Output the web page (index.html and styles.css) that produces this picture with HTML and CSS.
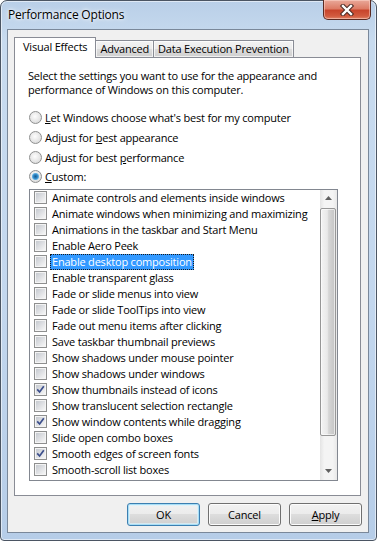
FILE: index.html
```html
<!DOCTYPE html>
<html lang="en">
<head>
    <meta charset="UTF-8">
    <meta name="viewport" content="width=device-width, initial-scale=1.0">
    <title>Performance Options</title>
    <link rel="stylesheet" href="styles.css">
</head>
<body>
    <div class="window">
        <!-- Title bar -->
        <div class="titlebar">
            <span class="title">Performance Options</span>
            <button class="close" aria-label="Close">
                <svg width="16" height="12" viewBox="0 0 16 12">
                    <path d="M4 2 L12 10 M12 2 L4 10" stroke="#4a2a24" stroke-width="4.4" stroke-linecap="square"/>
                    <path d="M4 2 L12 10 M12 2 L4 10" stroke="#fff" stroke-width="2.4" stroke-linecap="square"/>
                </svg>
            </button>
        </div>

        <div class="client">
            <!-- Tabs -->
            <div class="tabs">
                <div class="tab selected">Visual Effects</div>
                <div class="tab">Advanced</div>
                <div class="tab">Data Execution Prevention</div>
            </div>

            <div class="panel">
                <p class="intro">Select the settings you want to use for the appearance and<br>performance of Windows on this computer.</p>

                <div class="options">
                    <label class="option"><span class="radio"></span><span><u>L</u>et Windows choose what's best for my computer</span></label>
                    <label class="option"><span class="radio"></span><span>Adjust for <u>b</u>est appearance</span></label>
                    <label class="option"><span class="radio"></span><span>Adjust for best <u>p</u>erformance</span></label>
                    <label class="option"><span class="radio on"></span><span><u>C</u>ustom:</span></label>
                </div>

                <!-- Effects list -->
                <div class="listbox">
                    <div class="items">
                        <div class="item"><span class="check"></span><span class="text">Animate controls and elements inside windows</span></div>
                        <div class="item"><span class="check"></span><span class="text">Animate windows when minimizing and maximizing</span></div>
                        <div class="item"><span class="check"></span><span class="text">Animations in the taskbar and Start Menu</span></div>
                        <div class="item"><span class="check"></span><span class="text">Enable Aero Peek</span></div>
                        <div class="item"><span class="check"></span><span class="text focus">Enable desktop composition</span></div>
                        <div class="item"><span class="check"></span><span class="text">Enable transparent glass</span></div>
                        <div class="item"><span class="check"></span><span class="text">Fade or slide menus into view</span></div>
                        <div class="item"><span class="check"></span><span class="text">Fade or slide ToolTips into view</span></div>
                        <div class="item"><span class="check"></span><span class="text">Fade out menu items after clicking</span></div>
                        <div class="item"><span class="check"></span><span class="text">Save taskbar thumbnail previews</span></div>
                        <div class="item"><span class="check"></span><span class="text">Show shadows under mouse pointer</span></div>
                        <div class="item"><span class="check"></span><span class="text">Show shadows under windows</span></div>
                        <div class="item"><span class="check"><svg viewBox="0 0 9 9"><path d="M1.2 4.4 L3.6 7 L7.8 1.2"/></svg></span><span class="text">Show thumbnails instead of icons</span></div>
                        <div class="item"><span class="check"></span><span class="text">Show translucent selection rectangle</span></div>
                        <div class="item"><span class="check"><svg viewBox="0 0 9 9"><path d="M1.2 4.4 L3.6 7 L7.8 1.2"/></svg></span><span class="text">Show window contents while dragging</span></div>
                        <div class="item"><span class="check"></span><span class="text">Slide open combo boxes</span></div>
                        <div class="item"><span class="check"><svg viewBox="0 0 9 9"><path d="M1.2 4.4 L3.6 7 L7.8 1.2"/></svg></span><span class="text">Smooth edges of screen fonts</span></div>
                        <div class="item"><span class="check"></span><span class="text">Smooth-scroll list boxes</span></div>
                    </div>
                    <div class="scrollbar">
                        <div class="arrow"><svg width="7" height="4" viewBox="0 0 7 4"><polygon points="0,4 3.5,0 7,4" fill="#606060"/></svg></div>
                        <div class="track"><div class="thumb"></div></div>
                        <div class="arrow"><svg width="7" height="4" viewBox="0 0 7 4"><polygon points="0,0 3.5,4 7,0" fill="#606060"/></svg></div>
                    </div>
                </div>
            </div>

            <!-- Dialog buttons -->
            <div class="buttons">
                <button class="btn default">OK</button>
                <button class="btn">Cancel</button>
                <button class="btn"><u>A</u>pply</button>
            </div>
        </div>
    </div>
</body>
</html>
```

FILE: styles.css
```css
* {
    box-sizing: border-box;
    margin: 0;
    padding: 0;
}
body {
    width: 377px;
    height: 541px;
    overflow: hidden;
    font-family: "Open Sans", "Noto Sans", sans-serif;
    font-size: 11px;
    letter-spacing: -0.2px;
    color: #000;
    background-color: #fff;
}
.window {
    display: flex;
    flex-direction: column;
    width: 377px;
    height: 541px;
    padding: 0 7px 7px 6px;
    border: 1px solid #4b5563;
    border-radius: 7px 7px 4px 4px;
    background: linear-gradient(180deg, #b9cfe8 0, #c8dbef 40px, #c3d7ee 300px, #b6cde8 100%);
    box-shadow: inset 0 0 0 1px rgba(255, 255, 255, 0.55);
}
.titlebar {
    display: flex;
    justify-content: space-between;
    align-items: flex-start;
    height: 28px;
}
.title {
    padding-left: 1px;
    font-size: 12px;
    line-height: 28px;
    text-shadow: 0 0 6px #fff, 0 0 3px #fff;
}
.close {
    display: flex;
    align-items: center;
    justify-content: center;
    width: 48px;
    height: 20px;
    margin: -1px -2px 0 0;
    border: 1px solid #5a2a22;
    border-top: none;
    border-radius: 0 0 5px 5px;
    background: linear-gradient(180deg, #e9a99a 0, #dd7c66 45%, #c8452c 55%, #d25b3f 85%, #e0866a 100%);
    box-shadow: inset 0 0 0 1px rgba(255, 220, 210, 0.5);
}
.client {
    display: flex;
    flex-direction: column;
    flex: 1;
    padding: 7px 7px 6px 6px;
    border: 1px solid #7a889a;
    background-color: #f0f0f0;
}
.tabs {
    position: relative;
    z-index: 1;
    display: flex;
    align-items: flex-end;
    height: 21px;
    margin-bottom: -1px;
}
.tab {
    height: 18px;
    margin-left: -1px;
    padding: 0 4px;
    line-height: 16px;
    border: 1px solid #898c95;
    background: linear-gradient(180deg, #f3f3f3 0, #ebebeb 50%, #dddddd 50%, #cfcfcf 100%);
    box-shadow: inset 0 0 0 1px rgba(255, 255, 255, 0.7);
}
.tab.selected {
    position: relative;
    z-index: 2;
    height: 21px;
    margin-left: 0;
    padding: 0 8px;
    line-height: 18px;
    border-bottom: none;
    background: #fff;
    box-shadow: none;
}
.panel {
    flex: 1;
    padding: 11px 11px 0 14px;
    border: 1px solid #898c95;
    background-color: #fff;
}
.intro {
    margin-left: -1px;
    line-height: 14px;
}
.options {
    margin-top: 11px;
}
.option {
    display: flex;
    align-items: center;
    gap: 3px;
    height: 19.7px;
}
.radio {
    flex-shrink: 0;
    width: 13px;
    height: 13px;
    border: 1px solid #8e8f8f;
    border-radius: 50%;
    background: radial-gradient(circle at 45% 40%, #fdfdfd 0, #e6e6e6 55%, #cfcfcf 100%);
}
.radio.on {
    background:
        radial-gradient(circle at 50% 50%, #1a5c8c 0, #2a7fbf 1.8px, #4fa3d9 2.8px, #7fc0e6 3.4px, transparent 3.9px),
        radial-gradient(circle at 45% 40%, #fdfdfd 0, #e6e6e6 55%, #cfcfcf 100%);
}
.listbox {
    display: flex;
    height: 292px;
    margin: 2px 11px 0 0;
    border: 1px solid #828790;
    background-color: #fff;
}
.items {
    flex: 1;
    min-width: 0;
    overflow: hidden;
}
.item {
    display: flex;
    align-items: center;
    height: 16px;
    padding-left: 4px;
    white-space: nowrap;
}
.check {
    display: flex;
    flex-shrink: 0;
    align-items: center;
    justify-content: center;
    width: 13px;
    height: 13px;
    padding: 1px;
    border: 1px solid #8e8f8f;
    background: linear-gradient(135deg, #c6cad0, #f6f6f6) content-box, #f4f4f4;
}
.check svg {
    width: 9px;
    height: 9px;
    fill: none;
    stroke: #3c4f8c;
    stroke-width: 1.7;
}
.text {
    height: 16px;
    margin-left: 3px;
    padding: 0 2px;
    line-height: 16px;
}
.text.focus {
    color: #fff;
    background-color: #3399ff;
    outline: 1px dotted #1a1a1a;
    outline-offset: -1px;
}
.scrollbar {
    display: flex;
    flex-direction: column;
    flex-shrink: 0;
    width: 17px;
    background: linear-gradient(90deg, #e4e4e4 0, #f4f4f4 25%, #f4f4f4 75%, #e8e8e8 100%);
}
.arrow {
    display: flex;
    align-items: center;
    justify-content: center;
    height: 17px;
}
.track {
    flex: 1;
}
.thumb {
    width: 16px;
    height: 228px;
    margin-top: 1px;
    border: 1px solid #979797;
    border-radius: 2px;
    background: linear-gradient(90deg, #f4f4f4 0, #e9e9e9 45%, #d6d6d6 55%, #c4c4c4 100%);
    box-shadow: inset 0 0 0 1px rgba(255, 255, 255, 0.6);
}
.buttons {
    display: flex;
    justify-content: flex-end;
    gap: 8px;
    margin: 7px -1px 0 0;
}
.btn {
    width: 73px;
    height: 23px;
    font-family: inherit;
    font-size: 11px;
    letter-spacing: inherit;
    color: #000;
    border: 1px solid #707070;
    border-radius: 3px;
    background: linear-gradient(180deg, #f2f2f2 0, #ebebeb 50%, #dddddd 50%, #cfcfcf 100%);
    box-shadow: inset 0 0 0 1px #fcfcfc;
}
.btn.default {
    border-color: #3c7fb1;
    box-shadow: inset 0 0 0 1px #a8def6, inset 0 0 0 2px rgba(220, 242, 252, 0.7);
}
u {
    text-decoration: underline;
    text-underline-offset: 1px;
}
```
